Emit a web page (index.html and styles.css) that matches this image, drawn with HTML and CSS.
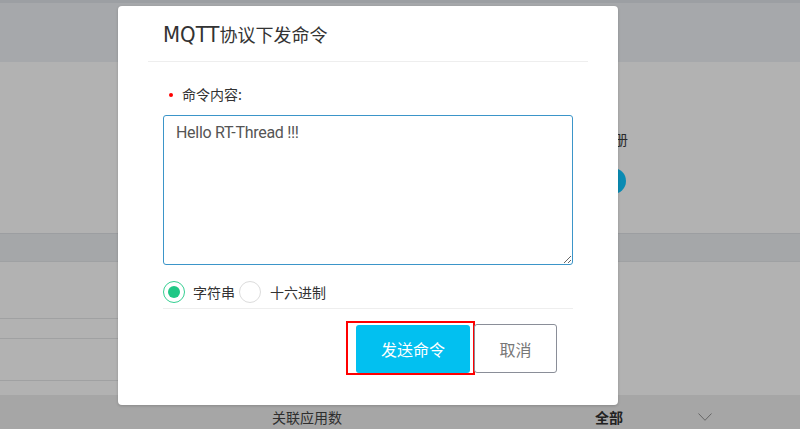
FILE: index.html
```html
<!DOCTYPE html>
<html lang="zh-CN">
<head>
<meta charset="utf-8">
<title>MQTT协议下发命令</title>
<link rel="stylesheet" href="styles.css">
</head>
<body>
<div class="page">
  <div class="topbar"></div>
  <div class="header"></div>
  <div class="hero">
    <span class="hero-link">注册</span>
    <span class="hero-dot"></span>
  </div>
  <div class="band"></div>
  <div class="rows">
    <div class="row row-a"></div>
    <div class="row row-b"></div>
    <div class="row row-c"></div>
  </div>
  <div class="filter">
    <span class="f-label">关联应用数</span>
    <span class="f-value">全部</span>
    <svg class="f-chevron" width="14" height="8" viewBox="0 0 14 8"><polyline points="0.5,0.5 7,7.3 13.5,0.5" fill="none" stroke="#666" stroke-width="1"/></svg>
  </div>
</div>

<div class="modal">
  <div class="modal-header">
    <h2 class="modal-title"><span class="latin">MQTT</span>协议下发命令</h2>
  </div>
  <div class="modal-body">
    <div class="field-label"><span class="req-dot"></span><span>命令内容:</span></div>
    <textarea class="cmd-input">Hello RT-Thread !!!</textarea>
    <div class="radio-row">
      <span class="radio checked"><span class="radio-dot"></span></span>
      <span class="radio-text">字符串</span>
      <span class="radio"></span>
      <span class="radio-text second">十六进制</span>
    </div>
    <div class="actions">
      <div class="highlight">
        <button class="btn btn-primary">发送命令</button>
      </div>
      <button class="btn btn-cancel">取消</button>
    </div>
  </div>
</div>
</body>
</html>
```

FILE: styles.css
```css
html, body {
  margin: 0;
  padding: 0;
}
body {
  width: 800px;
  height: 429px;
  overflow: hidden;
  position: relative;
  font-family: "Noto Sans CJK SC", "Noto Sans", sans-serif;
  color: #333;
  background: #b2b2b2;
}

.page {
  display: flex;
  flex-direction: column;
  height: 429px;
}
.topbar {
  height: 3px;
  background: #9c9fa3;
}
.header {
  height: 59px;
  background: #a6a8ab;
}
.hero {
  height: 171px;
  box-sizing: border-box;
  padding: 67px 172px 0 0;
  display: flex;
  flex-direction: column;
  align-items: flex-end;
  background: #b2b2b2;
}
.hero-link {
  font-size: 14px;
  line-height: 20px;
  color: #2a2a2a;
}
.hero-dot {
  width: 26px;
  height: 26px;
  border-radius: 50%;
  background: #0a8bb3;
  margin-top: 19px;
  margin-right: 2px;
}
.band {
  height: 27px;
  background: #a5a7a9;
  border-top: 1px solid #9c9ea1;
  border-bottom: 1px solid #9fa1a3;
}
.rows {
  width: 600px;
}
.row {
  border-bottom: 1px solid #a0a1a2;
}
.row-a { height: 56px; }
.row-b { height: 19px; }
.row-c { height: 41px; margin-bottom: 14px; }

.filter {
  height: 34px;
  box-sizing: border-box;
  padding: 10px 0 0 272px;
  background: #a6a6a6;
  display: flex;
  align-items: center;
  font-size: 14px;
}
.f-label {
  color: #2e2e2e;
  line-height: 20px;
}
.f-value {
  margin-left: 253px;
  font-weight: bold;
  color: #222;
  line-height: 20px;
}
.f-chevron {
  margin-left: 75px;
  display: block;
}

/* modal */
.modal {
  position: absolute;
  left: 118px;
  top: 6px;
  width: 500px;
  height: 399px;
  background: #fff;
  border-radius: 4px;
  box-shadow: 0 1px 3px rgba(0, 0, 0, 0.18);
}
.modal-header {
  margin: 0 30px;
  padding-left: 15px;
  height: 55px;
  border-bottom: 1px solid #eeeeee;
  display: flex;
  align-items: center;
}
.modal-title {
  margin: 0;
  font-size: 18px;
  font-weight: normal;
  color: #333;
  line-height: 24px;
  padding-top: 1px;
}
.modal-title .latin {
  font-family: "Liberation Sans Narrow", "DejaVu Sans Condensed", "Liberation Sans", sans-serif;
  font-size: 22px;
}

.modal-body {
  padding: 22px 45px 0;
}
.field-label {
  display: flex;
  align-items: center;
  font-size: 14px;
  line-height: 20px;
  color: #333;
}
.req-dot {
  width: 4px;
  height: 4px;
  border-radius: 50%;
  background: #f00;
  margin: 2px 9px 0 6px;
}
.cmd-input {
  display: block;
  box-sizing: border-box;
  width: 410px;
  height: 150px;
  margin-top: 11px;
  padding: 6px 12px;
  border: 1px solid #3b95c9;
  border-radius: 3px;
  outline: none;
  font-family: Roboto, "Liberation Sans", sans-serif;
  font-size: 16px;
  letter-spacing: -0.3px;
  line-height: 22px;
  color: #555;
  resize: both;
}
.radio-row {
  display: flex;
  align-items: center;
  margin-top: 16px;
  height: 22px;
  padding-bottom: 5px;
  border-bottom: 1px solid #eeeeee;
  font-size: 14px;
  color: #333;
}
.radio {
  width: 22px;
  height: 22px;
  box-sizing: border-box;
  border: 1px solid #dcdcdc;
  border-radius: 50%;
  display: flex;
  align-items: center;
  justify-content: center;
}
.radio.checked {
  border-color: #35cf92;
}
.radio-dot {
  width: 12px;
  height: 12px;
  border-radius: 50%;
  background: #20c785;
}
.radio-text {
  margin: 0 4px 0 8px;
  line-height: 20px;
}
.radio-text.second {
  margin-left: 9px;
}

.actions {
  display: flex;
  justify-content: flex-end;
  align-items: flex-start;
  margin-top: 12px;
  padding-right: 16px;
}
.highlight {
  border: 2px solid #f00;
  padding: 2px 3px 0 8px;
  display: flex;
}
.btn {
  font-family: "Noto Sans CJK SC", sans-serif;
  font-size: 16px;
  border-radius: 3px;
  cursor: pointer;
  padding: 0;
}
.btn-primary {
  width: 114px;
  height: 48px;
  border: none;
  background: #02c0f0;
  color: #fff;
}
.btn-cancel {
  width: 83px;
  height: 49px;
  margin-top: 3px;
  margin-left: -1px;
  border: 1px solid #8a8e98;
  background: #fff;
  color: #777;
}
```
